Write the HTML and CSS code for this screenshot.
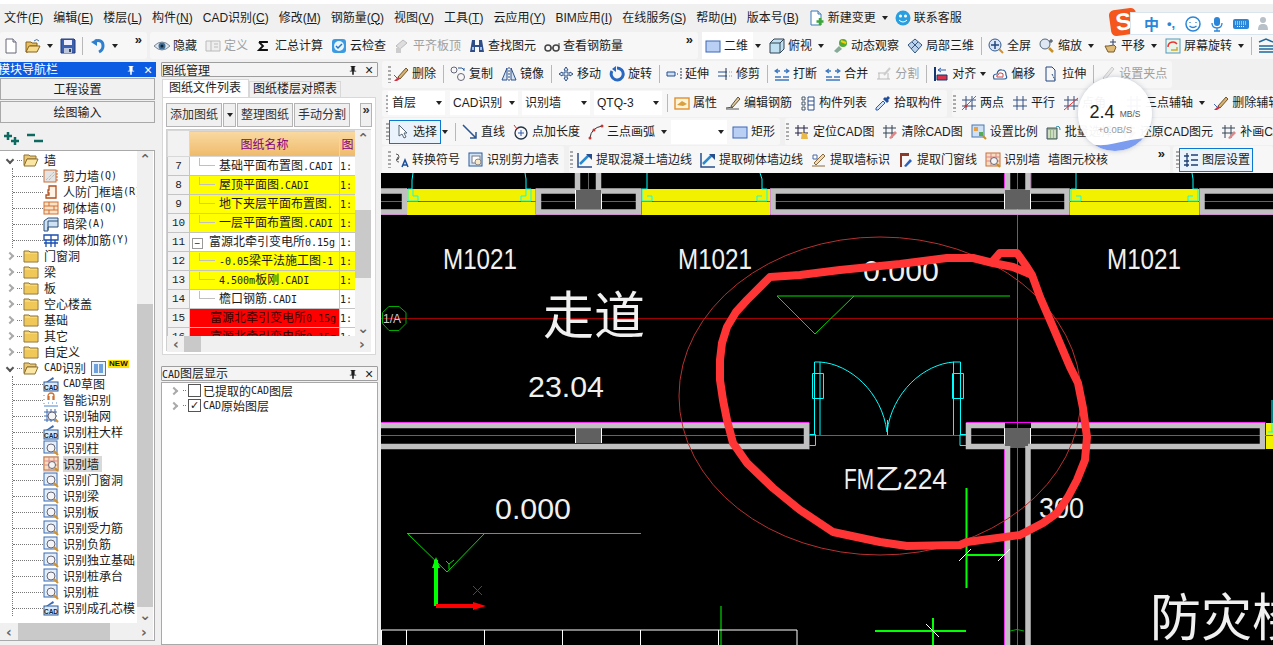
FILE: index.html
```html
<!DOCTYPE html>
<html lang="zh-CN">
<head>
<meta charset="utf-8">
<title>钢筋算量</title>
<link rel="stylesheet" href="styles.css">
</head>
<body>
<svg class="defs" xmlns="http://www.w3.org/2000/svg">
<symbol id="pinI" viewBox="0 0 10 12"><path d="M2 1h6v1H7v5h2v1H6v4H4V8H1V7h2V2H2z" fill="currentColor"/></symbol>
<symbol id="new" viewBox="0 0 16 16"><path d="M3 1h7l3 3v11H3z" fill="#fff" stroke="#667"/><path d="M10 1v3h3" fill="#dde" stroke="#667"/></symbol>
<symbol id="newc" viewBox="0 0 16 16"><path d="M2 1h7l3 3v11H2z" fill="#fff" stroke="#3a7ab8"/><path d="M9 1v3h3" fill="#dde" stroke="#3a7ab8"/><path d="M11 8v7M7.500 11.500h7" stroke="#3aa53a" stroke-width="2.500"/></symbol>
<symbol id="open" viewBox="0 0 16 16"><path d="M1 4h5l1 1h5v3H5L3 14H1z" fill="#e8c060" stroke="#86601c"/><path d="M4 8h11l-3 6H1z" fill="#f7dc8c" stroke="#86601c"/><path d="M9 3q3-3 5 0" fill="none" stroke="#3a6fb0"/></symbol>
<symbol id="save" viewBox="0 0 16 16"><path d="M1 1h13l1 1v13H1z" fill="#3c5fb0" stroke="#223a78"/><path d="M4 2h8v5H4z" fill="#eef"/><path d="M4 10h8v5H4z" fill="#bcc6dc"/><path d="M9 11h2v3H9z" fill="#345"/></symbol>
<symbol id="undo" viewBox="0 0 16 16"><path d="M5 3q8-2 8 5 0 4-4 6" fill="none" stroke="#2f7fd0" stroke-width="3"/><path d="M1 4l6-3v7z" fill="#2f7fd0"/></symbol>
<symbol id="eye" viewBox="0 0 16 16"><path d="M0 8q8-8 16 0-8 8-16 0z" fill="#dfe6ee" stroke="#7b8794"/><circle cx="8" cy="8" r="3.500" fill="#3f6f96"/><circle cx="8" cy="8" r="1.500" fill="#123"/></symbol>
<symbol id="def" viewBox="0 0 16 16"><path d="M1 3h14v10H1z" fill="#eee" stroke="#bbb"/><path d="M6 3v10M9 6h4M9 9h4" stroke="#bbb" fill="none"/></symbol>
<symbol id="sigma" viewBox="0 0 16 16"><path d="M3 4h8v1M11 11v1H3l4-4-4-4" fill="none" stroke="#111" stroke-width="1.800"/></symbol>
<symbol id="cloud" viewBox="0 0 16 16"><rect x="1" y="1" width="14" height="14" rx="3" fill="#3c9be0"/><circle cx="8" cy="8" r="5" fill="#eaf5ff"/><path d="M5 8l2 2 4-4" fill="none" stroke="#2378c0" stroke-width="1.500"/></symbol>
<symbol id="flat" viewBox="0 0 16 16"><path d="M2 8l7-6 4 3-7 6z" fill="#ddd" stroke="#bbb"/><path d="M2 10h5v5H2z" fill="#ccc"/></symbol>
<symbol id="find" viewBox="0 0 16 16"><path d="M3 2h3v5h4V2h3l2 12H10V9H6v5H1z" fill="#2f4d86"/><path d="M3 9h2v3H3zM11 9h2v3h-2z" fill="#9cc0ea"/></symbol>
<symbol id="glass" viewBox="0 0 16 16"><circle cx="4" cy="10" r="3" fill="none" stroke="#444" stroke-width="1.500"/><circle cx="12" cy="10" r="3" fill="none" stroke="#444" stroke-width="1.500"/><path d="M7 10h2M15 10V5" stroke="#444" fill="none"/></symbol>
<symbol id="r2d" viewBox="0 0 16 16"><rect x="1" y="3" width="14" height="11" fill="#b9d0f4" stroke="#3c66b8"/></symbol>
<symbol id="box" viewBox="0 0 16 16"><path d="M1 5l4-4h10v10l-4 4H1z" fill="#bfe0f0" stroke="#345"/><path d="M1 5h10v10M11 5l4-4" fill="none" stroke="#345"/></symbol>
<symbol id="orbit" viewBox="0 0 16 16"><path d="M2 13l5-5 3 3-5 4z" fill="#8a9"/><circle cx="11" cy="5" r="4" fill="#5a3"/><path d="M9 3l5 2" stroke="#fc0" stroke-width="2"/></symbol>
<symbol id="r3d" viewBox="0 0 16 16"><path d="M1 7l7-6 7 6-7 8z" fill="#bcd4ee" stroke="#35577f"/><path d="M5 4l7 7M11 4l-7 7" stroke="#35577f" fill="none"/></symbol>
<symbol id="full" viewBox="0 0 16 16"><circle cx="7" cy="7" r="6" fill="#d8e6f8" stroke="#345a90"/><path d="M7 3v8M3 7h8" stroke="#24477c" fill="none" stroke-width="1.500"/><path d="M11 11l4 4" stroke="#d09030" stroke-width="2"/></symbol>
<symbol id="zoom" viewBox="0 0 16 16"><circle cx="6" cy="6" r="5" fill="#dde8f4" stroke="#567"/><path d="M10 10l4 4" stroke="#c89028" stroke-width="2.500"/><path d="M12 1v4M10 3h4" stroke="#345"/></symbol>
<symbol id="pan" viewBox="0 0 16 16"><path d="M3 8l3 6h6l2-5-2-2-6 1z" fill="#e0bb78" stroke="#7a5b25"/><path d="M11 1v6M8 4h6" stroke="#346" fill="none"/></symbol>
<symbol id="rot" viewBox="0 0 16 16"><rect x="1" y="1" width="14" height="14" fill="#e8f6ea" stroke="#59b"/><path d="M3 9a5 5 0 0 1 9-3" fill="none" stroke="#e33" stroke-width="1.500"/><path d="M6 12h6V9" fill="none" stroke="#ca3" stroke-width="1.500"/></symbol>
<symbol id="lay" viewBox="0 0 16 16"><path d="M1 4l7-3 7 3M1 8h14M1 11h14M1 14h14" fill="none" stroke="#1c6a9c" stroke-width="1.500"/></symbol>
<symbol id="del" viewBox="0 0 16 16"><path d="M5 11l8-9 2 2-8 9z" fill="#d8b070" stroke="#6d5730"/><path d="M1 15l4-4 2 2-3 2z" fill="#c34"/><path d="M1 9l4 4" stroke="#46a"/></symbol>
<symbol id="copy" viewBox="0 0 16 16"><circle cx="4" cy="4" r="3" fill="none" stroke="#667"/><circle cx="11" cy="11" r="3.500" fill="none" stroke="#667"/><path d="M8 2h4l2 2M14 2v3" fill="none" stroke="#2b5a9a"/></symbol>
<symbol id="mirror" viewBox="0 0 16 16"><path d="M6 2L1 14h5zM10 2l5 12h-5z" fill="#d7e4f5" stroke="#2c4f8a"/><path d="M8 1v14" stroke="#2c4f8a" stroke-dasharray="2 1"/></symbol>
<symbol id="move" viewBox="0 0 16 16"><path d="M8 1l2 3H9v3h3V6l3 2-3 2V9H9v3h1l-2 3-2-3h1V9H4v1L1 8l3-2v1h3V4H6z" fill="#dfe9f6" stroke="#2d4f86"/></symbol>
<symbol id="rotate" viewBox="0 0 16 16"><path d="M8 2a6 6 0 1 1-5 3" fill="none" stroke="#2868c0" stroke-width="3"/><path d="M7 0v6L3 3z" fill="#2868c0"/></symbol>
<symbol id="extend" viewBox="0 0 16 16"><path d="M1 6h8v4H1z" fill="#cfe0f5" stroke="#244d90"/><path d="M11 8h1M15 2v12" stroke="#234" fill="none" stroke-dasharray="2 1"/></symbol>
<symbol id="trim" viewBox="0 0 16 16"><path d="M1 6h9M1 10h9" stroke="#244d90" fill="none"/><path d="M9 2v12" stroke="#234" fill="none"/><path d="M12 6h3M12 10h3" stroke="#999" fill="none" stroke-dasharray="1 1"/></symbol>
<symbol id="brk" viewBox="0 0 16 16"><path d="M1 11h6M9 11h6M1 14h14M4 3l-3 2 3 2M12 3l3 2-3 2M2 5h4M10 5h4" fill="none" stroke="#3c78c0" stroke-width="1.300"/></symbol>
<symbol id="split" viewBox="0 0 16 16"><path d="M2 7l8 0 3-4M1 13h13M3 7v6M12 7v6" fill="none" stroke="#bbb"/><path d="M8 9l6-7" stroke="#ccc" stroke-width="2"/></symbol>
<symbol id="align" viewBox="0 0 16 16"><path d="M2 1v14" stroke="#14356e" stroke-width="2"/><path d="M4 9h10v5H4z" fill="#d8334a" stroke="#14356e"/><path d="M5 4h8M5 4l3-2M5 4l3 2" fill="none" stroke="#2c5cae"/></symbol>
<symbol id="offset" viewBox="0 0 16 16"><path d="M2 13q-2-5 3-5 1-5 5-4 4 0 4 5 2 4-2 4z" fill="#fff" stroke="#2a5a9a" stroke-width="1.200"/><path d="M5 11q-1-2 1-2 1-3 3-2 3 0 2 3 0 2-1 1z" fill="none" stroke="#c44"/></symbol>
<symbol id="stretch" viewBox="0 0 16 16"><path d="M3 1h6l3 3v11H3z" fill="none" stroke="#22477e"/><path d="M9 8l3 6" stroke="#22477e" stroke-dasharray="2 1"/></symbol>
<symbol id="grip" viewBox="0 0 16 16"><path d="M3 12l9-11 2 2-9 11z" fill="#e8e8e8" stroke="#ccc"/></symbol>
<symbol id="prop" viewBox="0 0 16 16"><rect x="1" y="3" width="14" height="11" fill="#fff3d8" stroke="#e09030" stroke-width="1.400"/><path d="M3 10l5-4 5 3-4 2z" fill="#d8a040"/></symbol>
<symbol id="edit" viewBox="0 0 16 16"><path d="M1 13l7-1M6 11l7-9 2 2-8 9z" fill="#e8c898" stroke="#554"/><path d="M1 14h13" stroke="#555"/></symbol>
<symbol id="list" viewBox="0 0 16 16"><path d="M2 2h3v3H2zM2 7h3v3H2zM2 12h3v3H2z" fill="#fff" stroke="#456"/><path d="M8 2h6v13H8z" fill="#fff" stroke="#2c4f8a"/><path d="M8 6h6M8 10h6" stroke="#2c4f8a"/></symbol>
<symbol id="pick" viewBox="0 0 16 16"><path d="M3 15l-2-0 0-2 7-7 2 2z" fill="#cfe2f8" stroke="#2c5cae"/><path d="M8 4l4 4 2-2-1-1 2-2-2-2-2 2-1-1z" fill="#234f9a"/></symbol>
<symbol id="twop" viewBox="0 0 16 16"><path d="M5 1v14M11 1v14M1 5h14M1 11h14" fill="none" stroke="#334e80"/><path d="M1 15L15 1" stroke="#3a9a3a"/><circle cx="5" cy="11" r="1.500" fill="#c33"/></symbol>
<symbol id="para" viewBox="0 0 16 16"><path d="M5 1v14M11 1v14M1 5h14M1 11h14" fill="none" stroke="#334e80"/></symbol>
<symbol id="angp" viewBox="0 0 16 16"><path d="M5 1v14M11 1v14M1 5h14M1 11h14" fill="none" stroke="#334e80"/><path d="M1 15L15 3" stroke="#e33"/></symbol>
<symbol id="layr" viewBox="0 0 16 16"><path d="M4 1v14M1 4h5M1 9h5M1 13h5M8 3h7M8 8h7M8 13h7" fill="none" stroke="#1f3f70" stroke-width="1.300"/></symbol>
<symbol id="sel" viewBox="0 0 16 16"><path d="M5 1v11l3-2 2 4 2-1-2-4h3z" fill="#fff" stroke="#567"/></symbol>
<symbol id="lin" viewBox="0 0 16 16"><path d="M1 1l13 13M14 8v6H8" fill="none" stroke="#2c5590" stroke-width="1.500"/></symbol>
<symbol id="plen" viewBox="0 0 16 16"><circle cx="8" cy="9" r="6" fill="none" stroke="#234" stroke-width="1.300"/><path d="M8 6v6M5 9h6" stroke="#2c5cae"/><path d="M1 1l3 4" stroke="#c33"/></symbol>
<symbol id="arc" viewBox="0 0 16 16"><path d="M2 14q1-10 12-12" fill="none" stroke="#333"/><circle cx="2" cy="14" r="1.500" fill="#c33"/><circle cx="14" cy="2" r="1.500" fill="#c33"/><circle cx="6" cy="6" r="1.500" fill="#c33"/></symbol>
<symbol id="loc" viewBox="0 0 16 16"><path d="M4 1v11M10 1v11M1 4h13M1 9h13" fill="none" stroke="#224"/><path d="M7 15l1-7 5 2 1 5z" fill="#e8b848"/></symbol>
<symbol id="clr" viewBox="0 0 16 16"><path d="M4 1v13M10 1v13M1 4h13M1 9h13" fill="none" stroke="#345"/><path d="M7 14l6-7 2 2-6 6z" fill="#d88"/></symbol>
<symbol id="scale" viewBox="0 0 16 16"><rect x="1" y="1" width="12" height="12" fill="#cfe0f4" stroke="#4a78b0"/><rect x="3" y="3" width="4" height="4" fill="#e8a040"/><rect x="8" y="8" width="4" height="4" fill="#5a5"/><path d="M12 12l3 3" stroke="#c89028" stroke-width="2"/></symbol>
<symbol id="batch" viewBox="0 0 16 16"><path d="M1 4h10v11H1z" fill="#9bb888" stroke="#456"/><path d="M3 6v8M6 6v8M9 6v8" stroke="#fff"/><path d="M10 3q4-2 4 3" fill="none" stroke="#28a"/></symbol>
<symbol id="conv" viewBox="0 0 16 16"><path d="M3 2a3 3 0 1 1 0 6M5 5q-3 5 1 5" fill="none" stroke="#555"/><path d="M9 15l3-7 3 7M10 13h4" fill="none" stroke="#1a4f9c" stroke-width="1.500"/></symbol>
<symbol id="tab" viewBox="0 0 16 16"><rect x="1" y="1" width="13" height="13" fill="#d5e5f8" stroke="#2a5a9a"/><rect x="4" y="4" width="8" height="7" fill="#fff" stroke="#778"/><circle cx="10" cy="10" r="3" fill="#f4e8c8" stroke="#888"/></symbol>
<symbol id="ext" viewBox="0 0 16 16"><path d="M1 1v14h14" fill="none" stroke="#274d8c" stroke-width="1.500"/><path d="M3 12l9-9" stroke="#2a8ad0" stroke-width="2.500"/><path d="M9 2h6v6z" fill="#274d8c"/></symbol>
<symbol id="ext2" viewBox="0 0 16 16"><path d="M1 14h13" stroke="#8a6a3a"/><path d="M3 11l9-9 2 2-9 9z" fill="#f0d8b8" stroke="#8a6a3a"/><path d="M2 3h4v4H2z" fill="#fff" stroke="#46a"/></symbol>
<symbol id="door" viewBox="0 0 16 16"><path d="M2 1h9v3H4v11H2z" fill="#8a3a2a"/><path d="M6 14l6-7 2 2-6 6z" fill="#2a60c0"/></symbol>
<symbol id="wall" viewBox="0 0 16 16"><rect x="1" y="1" width="14" height="13" fill="#f8dcc0" stroke="#c87038"/><path d="M1 5h14M1 9h14M6 1v13M11 1v13" stroke="#d88" fill="none"/><circle cx="9" cy="9" r="3.500" fill="#f4f4f4" stroke="#667"/><path d="M12 12l3 3" stroke="#c89028" stroke-width="2"/></symbol>
<symbol id="fo" viewBox="0 0 16 16"><path d="M1 3h5l1 1h6v3H4L2 13H1z" fill="#eac874" stroke="#8c7030"/><path d="M4 7h11l-3 7H1z" fill="#fbe6a4" stroke="#8c7030"/></symbol>
<symbol id="fc" viewBox="0 0 16 16"><path d="M1 3h5l1 1h8v10H1z" fill="#f6d878" stroke="#8c7030"/><path d="M2 6h12v7H2z" fill="#f0c858"/></symbol>
<symbol id="tw1" viewBox="0 0 16 16"><rect x="1" y="2" width="12" height="12" fill="#e4e4e4" stroke="#c87038"/><path d="M3 12l8-8M6 12l6-6" stroke="#aaa" stroke-dasharray="1 1"/><path d="M14 2v12" stroke="#d06020" stroke-dasharray="2 1"/></symbol>
<symbol id="tw2" viewBox="0 0 16 16"><path d="M6 2h7v12H3v-3h3V9H5V6h1z" fill="#fff3e4" stroke="#b05020" stroke-width="1.300"/></symbol>
<symbol id="tw3" viewBox="0 0 16 16"><rect x="1" y="2" width="14" height="12" fill="#fbe2c8" stroke="#d07030"/><path d="M1 6h14M1 10h14M6 2v4M11 6v4M6 10v4" stroke="#d07030" fill="none"/></symbol>
<symbol id="tw4" viewBox="0 0 16 16"><path d="M1 5l4-3h10v9H5v4H1z" fill="#cfe2f4" stroke="#2c4f7a"/><path d="M5 5v9M5 5h10" stroke="#2c4f7a" fill="none"/></symbol>
<symbol id="tw5" viewBox="0 0 16 16"><path d="M1 3h14v5H1zM3 8v7M8 3v12M12 8v7M1 11h14" fill="none" stroke="#1a4fb0" stroke-width="1.300"/></symbol>
<symbol id="tcad" viewBox="0 0 16 16"><rect x="1" y="6" width="14" height="9" fill="#dde8f8" stroke="#2a5a9a"/><path d="M3 6l7-5 1 2-6 3z" fill="#3a6ab0"/><text x="8" y="13.500" font-size="6.500" text-anchor="middle" font-family="Liberation Sans" font-weight="700" fill="#123">CAD</text></symbol>
<symbol id="tmag" viewBox="0 0 16 16"><rect x="1" y="1" width="13" height="12" fill="#e4eefa" stroke="#3a6ab0"/><circle cx="8" cy="8" r="4" fill="#f5f5f5" stroke="#667"/><path d="M11 11l4 4" stroke="#d09030" stroke-width="2"/></symbol>
<symbol id="tgrid" viewBox="0 0 16 16"><path d="M4 1v13M8 1v13M12 1v13M1 4h13M1 8h13M1 12h13" stroke="#3a6ab0" fill="none"/><circle cx="9" cy="8" r="4" fill="#f5f5f5" stroke="#667"/><path d="M12 11l3 3" stroke="#d09030" stroke-width="2"/></symbol>
<symbol id="tmgn" viewBox="0 0 16 16"><path d="M5 8V4a3 3 0 0 1 6 0v4M10 8V4M6 8V4" fill="none" stroke="#d07030" stroke-width="1.300"/><path d="M1 3v1M1 7v1M1 11v1M1 14h14M5 11h1M9 11h1M13 11h1" stroke="#4a88d0"/></symbol>
</svg>

<div class="app">
  <nav class="menubar">
    <span>文件(<u>F</u>)</span><span>编辑(<u>E</u>)</span><span>楼层(<u>L</u>)</span><span>构件(<u>N</u>)</span><span>CAD识别(<u>C</u>)</span><span>修改(<u>M</u>)</span><span>钢筋量(<u>Q</u>)</span><span>视图(<u>V</u>)</span><span>工具(<u>T</u>)</span><span>云应用(<u>Y</u>)</span><span>BIM应用(<u>I</u>)</span><span>在线服务(<u>S</u>)</span><span>帮助(<u>H</u>)</span><span>版本号(<u>B</u>)</span>
    <span class="it"><svg class="ic"><use href="#newc"/></svg>新建变更</span><i class="car"></i>
    <span class="it"><svg class="ic" viewBox="0 0 16 16"><circle cx="8" cy="8" r="7.500" fill="#2a9fe0"/><circle cx="5.500" cy="6" r="1.500" fill="#fff"/><circle cx="10.500" cy="6" r="1.500" fill="#fff"/><path d="M4 10q4 4 8 0" fill="none" stroke="#fff"/></svg>联系客服</span>
  </nav>

  <div class="row top">
    <div class="seg seg-file">
      <svg class="ic"><use href="#new"/></svg><svg class="ic"><use href="#open"/></svg><i class="car"></i><svg class="ic"><use href="#save"/></svg><b class="sep"></b><svg class="ic"><use href="#undo"/></svg><i class="car"></i><span class="over">»</span>
    </div>
    <div class="seg seg-main">
      <span class="it"><svg class="ic"><use href="#eye"/></svg>隐藏</span>
      <span class="it off"><svg class="ic"><use href="#def"/></svg>定义</span>
      <span class="it"><svg class="ic"><use href="#sigma"/></svg>汇总计算</span>
      <span class="it"><svg class="ic"><use href="#cloud"/></svg>云检查</span>
      <span class="it off"><svg class="ic"><use href="#flat"/></svg>平齐板顶</span>
      <span class="it"><svg class="ic"><use href="#find"/></svg>查找图元</span>
      <span class="it"><svg class="ic"><use href="#glass"/></svg>查看钢筋量</span>
      <span class="over">»</span>
    </div>
    <div class="seg seg-view">
      <span class="it lit"><svg class="ic"><use href="#r2d"/></svg>二维</span><i class="car"></i>
      <span class="it"><svg class="ic"><use href="#box"/></svg>俯视</span><i class="car"></i>
      <span class="it"><svg class="ic"><use href="#orbit"/></svg>动态观察</span>
      <span class="it"><svg class="ic"><use href="#r3d"/></svg>局部三维</span><b class="sep"></b>
      <span class="it"><svg class="ic"><use href="#full"/></svg>全屏</span>
      <span class="it"><svg class="ic"><use href="#zoom"/></svg>缩放</span><i class="car"></i>
      <span class="it"><svg class="ic"><use href="#pan"/></svg>平移</span><i class="car"></i>
      <span class="it"><svg class="ic"><use href="#rot"/></svg>屏幕旋转</span><i class="car"></i><b class="sep"></b>
      <svg class="ic"><use href="#lay"/></svg>
    </div>
  </div>

  <div class="main">
    <aside class="nav">
      <h2 class="title blue"><span class="title-text">模块导航栏</span><svg class="pin"><use href="#pinI"/></svg><span class="close">×</span></h2>
      <button class="navbtn">工程设置</button>
      <button class="navbtn">绘图输入</button>
      <div class="plusrow">
        <svg class="pm" viewBox="0 0 16 14"><path d="M4 1v8M0 5h8M11 6v8M7 10h8" stroke="#0c6a60" stroke-width="2.500" fill="none"/></svg>
        <svg class="pm" viewBox="0 0 16 14"><path d="M0 4h8M7 10h9" stroke="#0c6a60" stroke-width="2.500" fill="none"/></svg>
      </div>
      <div class="treebox">
        <div class="tree">
          <div class="node"><i class="chev down"></i><b class="dash"></b><svg class="ic"><use href="#fo"/></svg>墙</div>
          <div class="branch">
            <div class="leaf"><b class="dash2"></b><svg class="ic"><use href="#tw1"/></svg>剪力墙<span class="lat">(Q)</span></div>
            <div class="leaf"><b class="dash2"></b><svg class="ic"><use href="#tw2"/></svg>人防门框墙<span class="lat">(R)</span></div>
            <div class="leaf"><b class="dash2"></b><svg class="ic"><use href="#tw3"/></svg>砌体墙<span class="lat">(Q)</span></div>
            <div class="leaf"><b class="dash2"></b><svg class="ic"><use href="#tw4"/></svg>暗梁<span class="lat">(A)</span></div>
            <div class="leaf"><b class="dash2"></b><svg class="ic"><use href="#tw5"/></svg>砌体加筋<span class="lat">(Y)</span></div>
          </div>
          <div class="node"><i class="chev"></i><b class="dash"></b><svg class="ic"><use href="#fc"/></svg>门窗洞</div>
          <div class="node"><i class="chev"></i><b class="dash"></b><svg class="ic"><use href="#fc"/></svg>梁</div>
          <div class="node"><i class="chev"></i><b class="dash"></b><svg class="ic"><use href="#fc"/></svg>板</div>
          <div class="node"><i class="chev"></i><b class="dash"></b><svg class="ic"><use href="#fc"/></svg>空心楼盖</div>
          <div class="node"><i class="chev"></i><b class="dash"></b><svg class="ic"><use href="#fc"/></svg>基础</div>
          <div class="node"><i class="chev"></i><b class="dash"></b><svg class="ic"><use href="#fc"/></svg>其它</div>
          <div class="node"><i class="chev"></i><b class="dash"></b><svg class="ic"><use href="#fc"/></svg>自定义</div>
          <div class="node"><i class="chev down"></i><b class="dash"></b><svg class="ic"><use href="#fo"/></svg><span class="lat">CAD</span>识别
            <svg class="cadbtn" viewBox="0 0 15 15"><rect x=".5" y=".5" width="14" height="14" fill="#eaf2fb" stroke="#4a7ab8"/><path d="M3 3h4v9H3zM8 3h4v9H8z" fill="#6fa2dc"/></svg><em class="newtag">NEW</em>
          </div>
          <div class="branch">
            <div class="leaf"><b class="dash2"></b><svg class="ic"><use href="#tcad"/></svg><span class="lat">CAD</span>草图</div>
            <div class="leaf"><b class="dash2"></b><svg class="ic"><use href="#tmgn"/></svg>智能识别</div>
            <div class="leaf"><b class="dash2"></b><svg class="ic"><use href="#tgrid"/></svg>识别轴网</div>
            <div class="leaf"><b class="dash2"></b><svg class="ic"><use href="#tcad"/></svg>识别柱大样</div>
            <div class="leaf"><b class="dash2"></b><svg class="ic"><use href="#tmag"/></svg>识别柱</div>
            <div class="leaf cur"><b class="dash2"></b><svg class="ic"><use href="#wall"/></svg><span class="curtext">识别墙</span></div>
            <div class="leaf"><b class="dash2"></b><svg class="ic"><use href="#tmag"/></svg>识别门窗洞</div>
            <div class="leaf"><b class="dash2"></b><svg class="ic"><use href="#tmag"/></svg>识别梁</div>
            <div class="leaf"><b class="dash2"></b><svg class="ic"><use href="#tmag"/></svg>识别板</div>
            <div class="leaf"><b class="dash2"></b><svg class="ic"><use href="#tmag"/></svg>识别受力筋</div>
            <div class="leaf"><b class="dash2"></b><svg class="ic"><use href="#tmag"/></svg>识别负筋</div>
            <div class="leaf"><b class="dash2"></b><svg class="ic"><use href="#tmag"/></svg>识别独立基础</div>
            <div class="leaf"><b class="dash2"></b><svg class="ic"><use href="#tmag"/></svg>识别桩承台</div>
            <div class="leaf"><b class="dash2"></b><svg class="ic"><use href="#tmag"/></svg>识别桩</div>
            <div class="leaf"><b class="dash2"></b><svg class="ic"><use href="#tcad"/></svg>识别成孔芯模</div>
          </div>
        </div>
        <div class="vbar tree-vbar"><span class="arr">⌃</span><span class="thumb"></span><span class="arr">⌄</span></div>
        <div class="hbar"><span class="arr">‹</span><span class="hthumb"></span><span class="arr">›</span></div>
      </div>
    </aside>

    <section class="drawings">
      <h2 class="title"><span class="title-text">图纸管理</span><svg class="pin"><use href="#pinI"/></svg><span class="close">×</span></h2>
      <div class="tabs"><span class="tab on">图纸文件列表</span><span class="tab">图纸楼层对照表</span></div>
      <div class="tabbody">
        <div class="dbar">
          <span class="dbtn">添加图纸</span><span class="dbtn drop"><i class="car"></i></span><span class="dbtn">整理图纸</span><span class="dbtn">手动分割</span><span class="dbtn more">»</span>
        </div>
        <div class="sheet">
          <div class="sheetview">
            <table class="grid">
              <colgroup><col class="c1"><col class="c2"><col class="c3"></colgroup>
              <thead><tr><th></th><th>图纸名称</th><th>图</th></tr></thead>
              <tbody>
                <tr><td class="n">7</td><td><b class="tl"></b>基础平面布置图<span class="lat">.CADI</span></td><td><span class="lat">1:</span></td></tr>
                <tr><td class="n">8</td><td class="y"><b class="tl"></b>屋顶平面图<span class="lat">.CADI</span></td><td class="y"><span class="lat">1:</span></td></tr>
                <tr><td class="n">9</td><td class="y"><b class="tl"></b>地下夹层平面布置图<span class="lat">.</span></td><td class="y"><span class="lat">1:</span></td></tr>
                <tr><td class="n">10</td><td class="y"><b class="tl"></b>一层平面布置图<span class="lat">.CADI</span></td><td class="y"><span class="lat">1:</span></td></tr>
                <tr><td class="n">11</td><td><b class="minus">−</b>富源北牵引变电所<span class="lat">0.15g</span></td><td><span class="lat">1:</span></td></tr>
                <tr><td class="n">12</td><td class="y"><b class="tl"></b><span class="lat">-0.05</span>梁平法施工图<span class="lat">-1</span></td><td class="y"><span class="lat">1:</span></td></tr>
                <tr><td class="n">13</td><td class="y"><b class="tl"></b><span class="lat">4.500m</span>板刚<span class="lat">.CADI</span></td><td class="y"><span class="lat">1:</span></td></tr>
                <tr><td class="n">14</td><td><b class="tl"></b>檐口钢筋<span class="lat">.CADI</span></td><td><span class="lat">1:</span></td></tr>
                <tr><td class="n">15</td><td class="r"><b class="ind"></b>富源北牵引变电所<span class="lat">0.15g</span></td><td><span class="lat">1:</span></td></tr>
                <tr><td class="n">16</td><td class="r"><b class="ind"></b>富源北牵引变电所<span class="lat">0.15g</span></td><td><span class="lat">1:</span></td></tr>
              </tbody>
            </table>
          </div>
          <div class="vbar grid-vbar"><span class="arr">⌃</span><span class="thumb"></span><span class="arr">⌄</span></div>
          <div class="hbar"><span class="arr">‹</span><span class="hthumb"></span><span class="arr">›</span></div>
        </div>
      </div>
      <h2 class="title second"><span class="title-text"><span class="lat">CAD</span>图层显示</span><svg class="pin"><use href="#pinI"/></svg><span class="close">×</span></h2>
      <div class="layers">
        <div class="lrow"><i class="chev"></i><b class="ld"></b><span class="cb"></span>已提取的<span class="lat">CAD</span>图层</div>
        <div class="lrow"><i class="chev"></i><b class="ld"></b><span class="cb">✓</span><span class="lat">CAD</span>原始图层</div>
      </div>
    </section>

    <section class="work">
      <div class="row"><div class="seg wseg lead">
        <b class="hand"></b>
        <span class="it"><svg class="ic"><use href="#del"/></svg>删除</span><b class="sep"></b>
        <span class="it"><svg class="ic"><use href="#copy"/></svg>复制</span>
        <span class="it"><svg class="ic"><use href="#mirror"/></svg>镜像</span><b class="sep"></b>
        <span class="it"><svg class="ic"><use href="#move"/></svg>移动</span>
        <span class="it"><svg class="ic"><use href="#rotate"/></svg>旋转</span><b class="sep"></b>
        <span class="it"><svg class="ic"><use href="#extend"/></svg>延伸</span>
        <span class="it"><svg class="ic"><use href="#trim"/></svg>修剪</span><b class="sep"></b>
        <span class="it"><svg class="ic"><use href="#brk"/></svg>打断</span>
        <span class="it"><svg class="ic"><use href="#brk"/></svg>合并</span>
        <span class="it off"><svg class="ic"><use href="#split"/></svg>分割</span><b class="sep"></b>
        <span class="it"><svg class="ic"><use href="#align"/></svg>对齐</span><i class="car tight"></i>
        <span class="it"><svg class="ic"><use href="#offset"/></svg>偏移</span>
        <span class="it"><svg class="ic"><use href="#stretch"/></svg>拉伸</span><b class="sep"></b>
        <span class="it off"><svg class="ic"><use href="#grip"/></svg>设置夹点</span>
      </div></div>

      <div class="row"><div class="seg wseg">
        <b class="hand"></b>
        <span class="combo first">首层<i class="car"></i></span>
        <span class="combo">CAD识别<i class="car"></i></span>
        <span class="combo">识别墙<i class="car"></i></span>
        <span class="combo">QTQ-3<i class="car"></i></span><b class="sep aftercombo"></b>
        <span class="it"><svg class="ic"><use href="#prop"/></svg>属性</span>
        <span class="it"><svg class="ic"><use href="#edit"/></svg>编辑钢筋</span>
        <span class="it"><svg class="ic"><use href="#list"/></svg>构件列表</span>
        <span class="it"><svg class="ic"><use href="#pick"/></svg>拾取构件</span>
      </div><div class="seg axis">
        <b class="hand"></b>
        <span class="it"><svg class="ic"><use href="#twop"/></svg>两点</span>
        <span class="it"><svg class="ic"><use href="#para"/></svg>平行</span>
        <span class="it"><svg class="ic"><use href="#angp"/></svg>点角</span>
        <span class="it far"><svg class="ic"><use href="#para"/></svg>三点辅轴</span><i class="car"></i>
        <span class="it"><svg class="ic"><use href="#del"/></svg>删除辅轴</span>
      </div></div>

      <div class="row"><div class="seg wseg">
        <b class="hand"></b>
        <span class="it box"><svg class="ic"><use href="#sel"/></svg>选择</span><i class="car"></i><b class="sep"></b>
        <span class="it"><svg class="ic"><use href="#lin"/></svg>直线</span>
        <span class="it"><svg class="ic"><use href="#plen"/></svg>点加长度</span>
        <span class="it"><svg class="ic"><use href="#arc"/></svg>三点画弧</span><i class="car"></i>
        <span class="combo blank"><i class="car"></i></span>
        <span class="it"><svg class="ic"><use href="#r2d"/></svg>矩形</span>
      </div><div class="seg axis">
        <b class="hand"></b>
        <span class="it"><svg class="ic"><use href="#loc"/></svg>定位CAD图</span>
        <span class="it"><svg class="ic"><use href="#clr"/></svg>清除CAD图</span>
        <span class="it"><svg class="ic"><use href="#scale"/></svg>设置比例</span>
        <span class="it"><svg class="ic"><use href="#batch"/></svg>批量选择</span>
        <span class="it"><svg class="ic"><use href="#clr"/></svg>还原CAD图元</span>
        <span class="it"><svg class="ic"><use href="#clr"/></svg>补画CAD</span>
      </div></div>

      <div class="row last"><div class="seg wseg lead">
        <b class="hand"></b>
        <span class="it"><svg class="ic"><use href="#conv"/></svg>转换符号</span>
        <span class="it"><svg class="ic"><use href="#tab"/></svg>识别剪力墙表</span>
      </div><div class="seg ext">
        <b class="hand"></b>
        <span class="it"><svg class="ic"><use href="#ext"/></svg>提取混凝土墙边线</span>
        <span class="it"><svg class="ic"><use href="#ext"/></svg>提取砌体墙边线</span>
        <span class="it"><svg class="ic"><use href="#ext2"/></svg>提取墙标识</span>
        <span class="it"><svg class="ic"><use href="#door"/></svg>提取门窗线</span>
        <span class="it"><svg class="ic"><use href="#wall"/></svg>识别墙</span>
        <span class="it">墙图元校核</span>
        <span class="over">»</span>
      </div><div class="seg laybox">
        <b class="hand"></b>
        <span class="it box"><svg class="ic"><use href="#layr"/></svg>图层设置</span>
      </div></div>

      <svg class="canvas" viewBox="381 173 892 472" xmlns="http://www.w3.org/2000/svg">
        <rect x="381" y="173" width="892" height="472" fill="#000"/>
        <g fill="#f2f200"><rect x="407" y="189" width="129" height="26"/><rect x="641" y="189" width="129" height="26"/><rect x="1070" y="189" width="129" height="26"/><rect x="1266" y="423" width="7" height="26"/></g>
        <g fill="none" stroke="#646464"><path d="M381 201.500h892M381 435.500h892"/><path d="M1017.500 173v472"/><path d="M588.500 173v16"/></g>
        <g fill="#606060"><rect x="576" y="189" width="25" height="20"/><rect x="1005" y="189" width="25" height="20"/><rect x="576" y="428" width="25" height="15"/><rect x="1005" y="428" width="25" height="20"/></g>
        <g fill="none" stroke="#fff"><path d="M575.500 189v20M601.500 189v20M1004.500 189v20M1030.500 189v20M575.500 428v15M601.500 428v15M1004.500 428v20M1030.500 428v20"/></g>
        <g fill="none" stroke="#f0f"><path d="M381 214.500h25.500v-26M536 188.500v26h105.500v-26M770.500 188.500v26h299M1199.500 214.500h74M1004.500 173v17M1031 173v16"/><path d="M381 422.500h428v27M966.500 449v-26.500h299M1004.500 449v196"/></g>
        <g fill="none" stroke="#c0c0c0" stroke-width="5.500">
          <path d="M381 191h23.500v21H381"/>
          <path d="M575 191h-36.500v21h100v-21H601"/>
          <path d="M1005 191H773v21h294v-21h-37"/>
          <path d="M1273 191h-71v21h71"/>
          <path d="M577.500 173v17M598.500 173v17M1007.500 173v17M1028 173v17"/>
          <path d="M381 425.500h425.500v21H381"/>
          <path d="M1005 425.500h-36.500v21H1005M1031 425.500h231.500v21H1028M1007.500 446v199M1028 446v199"/>
        </g>
        <g fill="none" stroke="#0ff">
          <path d="M413 173l-1 7v9h-4v12h10v-5h-5v-7M525 173l1 6v10h5v12h-10v-5h5v-7M647 173v16h-5v12h10v-5h-5M760 173l2 6v10h5v12h-10v-5h5M1076 173v16h-5v12h10v-5h-5M1192 173l1 6v10h5v12h-10v-5h5"/>
          <path d="M814.500 435v-73h5.500v73M812.500 373.500h11v25h-11zM820 362c30 2 62 30 67 70M953.500 435v-73h7v73M952.500 373.500h11v25h-11zM954 362c-30 2-62 30-67 70M887.500 420v15M809.500 434.500h6v11h-6M966 434.500h-6v11h6"/>
          <path d="M1268 432h5M1272 400v32"/>
        </g>
        <path d="M381 318.500h892" stroke="#a00000" fill="none"/>
        <g fill="none" stroke="#00e000"><path d="M777 296h233M777 296l38 38 39-38M407 533.500h234M407 533l40 39 38-39"/><path d="M446 561l3 3 5-4M449 564v5"/></g>
        <g fill="none" stroke="#0f0"><path d="M966.500 488v100M966 555h39" stroke-width="2"/><path d="M875 631h91M933 618v27" stroke-width="2"/><path d="M721 606v39"/></g>
        <path d="M1010 631q7-3 14 0" fill="none" stroke="#0a0"/>
        <g fill="none" stroke="#fff"><path d="M959 561l12-12M998 561l12-12M926 624l13 13"/><path d="M381.500 645v-15h415.500v15M406.500 630v15M484.500 630v15M562.500 630v15M640.500 630v15M718.500 630v15"/></g>
        <g class="cadtx">
          <text x="443" y="269" textLength="74" lengthAdjust="spacingAndGlyphs">M1021</text>
          <text x="678" y="269" textLength="74" lengthAdjust="spacingAndGlyphs">M1021</text>
          <text x="1107" y="269" textLength="74" lengthAdjust="spacingAndGlyphs">M1021</text>
          <text x="863" y="281" textLength="76" lengthAdjust="spacingAndGlyphs">0.000</text>
          <text x="528" y="397" textLength="76" lengthAdjust="spacingAndGlyphs">23.04</text>
          <text x="495" y="519" textLength="76" lengthAdjust="spacingAndGlyphs">0.000</text>
          <text x="844" y="489" textLength="30" lengthAdjust="spacingAndGlyphs">FM</text>
          <text x="903" y="489" textLength="44" lengthAdjust="spacingAndGlyphs">224</text>
          <text x="1039" y="518" textLength="45" lengthAdjust="spacingAndGlyphs">300</text>
          <text x="875" y="489" class="cjk30">乙</text>
          <text x="543" y="334" class="cjk52">走道</text>
          <text x="1150" y="636" class="cjk52">防灾楼</text>
          <text x="383" y="323" class="small">1/A</text>
        </g>
        <path d="M389 306.500h10l7 6v11l-7 7h-10l-6.500-7v-11z" fill="none" stroke="#0a0"/>
        <g fill="none">
          <path d="M436 606v-46" stroke="#0f0" stroke-width="4"/><path d="M436 557l-4 11h8z" fill="#0f0"/>
          <path d="M436 606h42" stroke="#f00" stroke-width="4"/><path d="M486 606l-13-4v8z" fill="#f00"/>
          <path d="M473 586l9 9M482 586l-9 9" stroke="#f00"/>
        </g>
        <ellipse cx="880" cy="396" rx="201" ry="159" fill="none" stroke="#b83030"/>
        <path d="M770 277L800 275 840 270 900 264 947 258H973L993 263 1013 267 1032 275 1040 297 1053 327 1070 367 1078 383 1083 408 1087 437 1085 460 1077 480 1068 497 1057 513 1043 523 1020 535 967 542 960 545 907 546 880 542 833 532 800 510 773 488 747 463 733 443 727 420 723 400 720 380 720 360 722 343 727 327 736 312 747 300ZM993 261L1000 253H1017L1027 267 1032 275" fill="none" stroke="#ff3535" stroke-width="8" stroke-linejoin="round" stroke-linecap="round"/>
      </svg>
    </section>
  </div>
</div>

<div class="sogou">
  <span class="slogo">S</span>
  <span class="sbar"><b class="szh">中</b><b class="sdot">•,</b>
    <svg class="si" viewBox="0 0 16 16"><circle cx="8" cy="8" r="7" fill="none" stroke="#2a86d8" stroke-width="1.500"/><path d="M5 6v1M11 6v1M4.500 10q3.500 3 7 0" fill="none" stroke="#2a86d8" stroke-width="1.300"/></svg>
    <svg class="si" viewBox="0 0 16 16"><rect x="5" y="1" width="6" height="9" rx="3" fill="#2a86d8"/><path d="M3 7q0 5 5 5t5-5M8 12v3M5 15h6" fill="none" stroke="#2a86d8" stroke-width="1.300"/></svg>
    <svg class="si" viewBox="0 0 16 16"><rect x="0" y="3" width="16" height="10" rx="2" fill="#2a86d8"/><path d="M2 6h12M2 8h12M4 10.500h8" stroke="#fff" stroke-dasharray="1 1" fill="none"/></svg>
    <svg class="si" viewBox="0 0 16 16"><circle cx="6" cy="4" r="3" fill="#b8c0c8"/><path d="M1 14q0-7 5-6 5-1 5 6z" fill="#b8c0c8"/></svg>
  </span>
</div>

<div class="speed">
  <div class="spd-main">2.4 <small>MB/S</small></div>
  <div class="spd-sub">+0.0B/S</div>
  <svg class="wave" viewBox="0 0 74 20" preserveAspectRatio="none"><path d="M0 6q18 10 36 4t38-8v18H0z" fill="#7c9cf0"/></svg>
</div>
</body>
</html>
```

FILE: styles.css
```css
* { box-sizing: border-box; }
html, body { margin: 0; height: 100%; }
body {
  width: 1273px;
  height: 645px;
  overflow: hidden;
  background: #f0f0f0;
  color: #1c1c1c;
  font: 12px/16px "Liberation Sans", "Noto Sans CJK SC", sans-serif;
  position: relative;
}
.defs { display: none; }
.app { display: flex; flex-direction: column; height: 645px; }

.menubar {
  height: 31px;
  border-top: 4px solid #fff;
  padding-left: 4px;
  display: flex;
  align-items: center;
  gap: 10px;
  white-space: nowrap;
}
.menubar .it { margin-right: -2px; }
.menubar .car { margin-right: -3px; }
u { text-decoration: underline; text-underline-offset: 1px; }

.ic { width: 16px; height: 16px; flex: none; margin-right: 3px; display: block; }
.it { display: inline-flex; align-items: center; white-space: nowrap; height: 22px; margin-right: 8px; }
.off { color: #a0a0a0; }
.car { width: 0; height: 0; flex: none; border: 3px solid transparent; border-top: 4px solid #222; border-bottom: 0; margin: 0 8px 0 -2px; }
.car.tight { margin: 0 6px 0 -4px; }
.sep { width: 1px; height: 18px; flex: none; background: #b8b8b8; margin: 0 6px 0 -1px; }
.over { margin-left: auto; font: 700 13px/12px "Liberation Sans", sans-serif; align-self: flex-start; padding: 0 5px 0 0; margin-top: 2px; }

.row { height: 29px; display: flex; align-items: center; white-space: nowrap; overflow: hidden; }
.row.last { height: 27px; }
.row.top { height: 29px; gap: 3px; }
.seg { height: 27px; display: flex; align-items: center; background: #f7f7f7; border-radius: 3px; flex: none; }
.seg-file { width: 147px; padding-left: 3px; }
.seg-file .ic { margin-right: 6px; }
.seg-file .car { margin: 0 7px 0 0; }
.seg-file .sep { margin: 0 7px 0 0; }
.seg-main { width: 548px; padding-left: 4px; }
.seg-view { flex: 1; padding-left: 0; margin-left: 1px; }
.lit { background: #fff; height: 27px; padding: 0 5px 0 3px; margin-right: 4px; }

.main { flex: 1; display: flex; min-height: 0; }

.title {
  margin: 0;
  height: 15px;
  font-weight: 400;
  font-size: 12px;
  line-height: 14px;
  display: flex;
  align-items: center;
  white-space: nowrap;
  overflow: hidden;
}
.title-text { flex: 1; }
.pin { width: 8px; height: 10px; flex: none; margin-right: 4px; }
.close { width: 16px; flex: none; text-align: center; font: 14px/14px "Liberation Sans", sans-serif; }

.nav { width: 156px; flex: none; padding-top: 2px; display: flex; flex-direction: column; }
.blue { background: #0b5ce2; color: #fff; }
.blue .title-text { margin-left: -2px; }
.blue .pin { margin-right: 5px; }
.navbtn {
  height: 22px;
  margin: 1px 1px 0 0;
  flex: none;
  width: 155px;
  background: #f1f1f1;
  border: 1px solid #a9a9a9;
  font: 12px/16px "Noto Sans CJK SC", sans-serif;
  color: #1c1c1c;
  padding: 0;
}
.plusrow { height: 27px; flex: none; display: flex; align-items: center; gap: 7px; padding: 3px 0 0 4px; }
.pm { width: 16px; height: 14px; }
.treebox {
  flex: 1;
  width: 155px;
  margin-bottom: 4px;
  display: grid;
  grid-template-columns: 137px 16px;
  grid-template-rows: 1fr 17px;
  background: #fff;
  border: 1px solid #a9a9a9;
  border-left: 0;
  min-height: 0;
}
.tree { overflow: hidden; padding-top: 1px; font-family: "Noto Sans CJK SC", sans-serif; }
.node, .leaf { height: 16px; display: flex; align-items: center; white-space: nowrap; }
.node { padding-left: 7px; }
.branch { margin-left: 12px; border-left: 1px dotted #777; }
.chev { width: 6px; height: 6px; flex: none; border-right: 2px solid #aaa; border-top: 2px solid #aaa; transform: rotate(45deg); margin-right: 4px; }
.chev.down { border-color: #555; transform: rotate(135deg); }
.dash { width: 5px; flex: none; border-top: 1px dotted #777; margin: 0 1px 0 0; }
.dash2 { width: 30px; flex: none; border-top: 1px dotted #777; }
.node .ic { margin-right: 5px; }
.leaf .ic { margin-right: 4px; }
.lat { font-family: "DejaVu Sans Mono", monospace; font-size: 10px; }
.cur .ic { background: #d9d9d9; }
.curtext { background: #d9d9d9; padding-right: 3px; }
.cadbtn { width: 15px; height: 15px; margin-left: 5px; flex: none; }
.newtag { font: 700 8px/8px "Liberation Sans", sans-serif; color: #111; background: #ffe100; padding: 0 1px; align-self: flex-start; margin-left: 2px; }

.vbar { background: #f0f0f0; display: flex; flex-direction: column; min-height: 0; align-items: stretch; }
.arr { display: block; text-align: center; color: #666; font: 700 14px/16px "DejaVu Sans", sans-serif; height: 16px; flex: none; }
.thumb { display: block; background: #c9c9c9; }
.tree-vbar::before { content: ""; display: block; flex: 137px 0 0; order: 1; }
.tree-vbar .arr:first-child { order: 0; }
.tree-vbar .thumb { order: 2; flex: 1; }
.tree-vbar .arr:last-child { order: 3; }
.hbar { grid-column: 1 / -1; background: #f0f0f0; display: flex; align-items: center; }
.hbar .arr { width: 18px; }
.hbar .arr:last-child { margin-left: auto; }
.hthumb { display: block; height: 100%; background: #c9c9c9; }
.treebox .hthumb { width: 92px; }

.drawings { width: 217px; margin-left: 5px; flex: none; padding-top: 2px; display: flex; flex-direction: column; }
.drawings .title { border: 1px solid #9e9e9e; background: #f4f4f4; border-radius: 1px; height: 15px; flex: none; }
.drawings .title-text { font-family: "Noto Sans CJK SC", sans-serif; }
.tabs { height: 18px; flex: none; display: flex; align-items: flex-end; padding: 0 0 0 1px; margin-top: 2px; }
.tab { height: 16px; line-height: 15px; padding: 0 3px; background: #f0f0f0; border: 1px solid #d8d8d8; border-bottom: 0; }
.tab.on { height: 18px; line-height: 17px; background: #fff; padding: 0 7px 0 6px; }
.tabbody { height: 258px; flex: none; margin: 0 0 0 1px; background: #fff; border: 1px solid #d8d8d8; padding: 5px 4px 3px 3px; display: flex; flex-direction: column; width: 214px; }
.dbar { height: 24px; flex: none; display: flex; gap: 1px; }
.dbtn { height: 24px; line-height: 22px; padding: 0 3px; background: #f0f0f0; border: 1px solid #b4b4b4; color: #333; flex: none; }
.drop { width: 13px; padding: 9px 0 0 3px; }
.drop .car { display: block; margin: 0; }
.more { margin-left: 9px; width: 12px; padding: 0; font: 700 13px/12px "Liberation Sans", sans-serif; text-align: center; }
.sheet { flex: 1; margin-top: 2px; display: grid; grid-template-columns: 188px 16px; grid-template-rows: 206px 16px; background: #f0f0f0; border: 1px solid #d0d0d0; min-height: 0; }
.sheetview { overflow: hidden; background: #fff; }
.grid { border-collapse: collapse; table-layout: fixed; width: 188px; font-family: "Noto Sans CJK SC", sans-serif; }
.c1 { width: 22px; }
.c2 { width: 150px; }
.c3 { width: 16px; }
.grid th {
  height: 26px;
  padding: 0;
  font-weight: 400;
  color: #800080;
  background: linear-gradient(#fad9a2, #eeba6b);
  border: 1px solid #d8d8d8;
  overflow: hidden;
}
.grid th:first-child { background: #f2f2f2; }
.grid td {
  height: 19px;
  padding: 0;
  border: 1px solid #c4c4c4;
  white-space: nowrap;
  overflow: hidden;
  line-height: 14px;
  font-size: 12px;
}
.grid td.n { text-align: center; background: #f2f2f2; font: 11px/14px "Liberation Mono", monospace; }
.y { background: #ffff00; }
.r { background: #ff0000; color: #3a0000; }
.tl { display: inline-block; width: 16px; height: 8px; margin: 0 4px 0 9px; border-left: 1px solid #c0c0c0; border-bottom: 1px solid #c0c0c0; vertical-align: top; }
.ind { display: inline-block; width: 20px; }
.minus { display: inline-block; width: 11px; height: 11px; margin: 0 6px 0 2px; border: 1px solid #999; font: 400 10px/9px "Liberation Sans", sans-serif; text-align: center; vertical-align: -1px; }
.grid-vbar::before { content: ""; display: block; flex: 64px 0 0; order: 1; }
.grid-vbar .arr:first-child { order: 0; }
.grid-vbar .thumb { order: 2; height: 68px; flex: none; }
.grid-vbar::after { content: ""; flex: 1; order: 3; }
.grid-vbar .arr:last-child { order: 4; }
.sheet .hthumb { width: 17px; margin-left: -1px; }
.drawings .title.second { margin-top: 11px; }
.layers { flex: 1; margin-top: 1px; background: #fff; border: 1px solid #a9a9a9; padding-top: 0; font-family: "Noto Sans CJK SC", sans-serif; }
.lrow { height: 15px; display: flex; align-items: center; padding-left: 9px; white-space: nowrap; }
.ld { width: 3px; border-top: 1px dotted #777; margin: 0 2px; flex: none; }
.cb { width: 13px; height: 13px; border: 1px solid #555; margin-right: 2px; flex: none; font: 11px/11px "DejaVu Sans", sans-serif; text-align: center; }

.work { flex: 1; min-width: 0; margin-left: 3px; display: flex; flex-direction: column; }
.wseg { padding-left: 4px; margin-left: 1px; }
.wseg .it:last-child { margin-right: 5px; }
.wseg.lead { padding-left: 6px; }
.axis, .ext { margin-left: 5px; padding-left: 1px; }
.ext { width: 601px; }
.laybox { margin-left: 3px; padding-left: 3px; flex: 1; }
.hand { width: 3px; height: 17px; flex: none; margin-right: 2px; background: repeating-linear-gradient(#aaa 0 2px, transparent 2px 4px); }
.axis .hand { margin-right: 5px; }
.ext .hand { margin-right: 4px; }
.laybox .hand { margin-right: 0; }
.combo { width: 68px; height: 24px; line-height: 22px; background: #fff; margin-right: 4px; padding: 0 3px; display: flex; align-items: center; flex: none; }
.combo .car { margin: 0 0 0 auto; }
.combo.first { width: 57px; padding-left: 4px; margin: 0 5px 0 -3px; }
.aftercombo { margin-left: 1px; }
.box { border: 1px solid #0a78d0; background: #eaf3fb; height: 24px; padding: 0 3px 0 0; }
.wseg > .box { width: 52px; justify-content: flex-end; padding-right: 3px; margin: 0 3px 0 -2px; }
.laybox .box { padding-left: 3px; width: 74px; margin-right: 0; }
.blank { width: 56px; margin: 0 5px 0 -4px; }
.far { margin-left: 12px; }

.canvas { display: block; width: 892px; height: 472px; flex: none; }
.cadtx text { fill: #f0f0f0; font: 29px "Liberation Sans", sans-serif; }
.cadtx .cjk30 { font: 28px "Noto Sans CJK SC", sans-serif; }
.cadtx .cjk52 { font: 51px "Noto Sans CJK SC", sans-serif; }
.cadtx .small { font: 12px "Liberation Sans", sans-serif; fill: #ccc; }

.sogou { position: absolute; left: 1110px; top: 9px; width: 163px; height: 27px; }
.slogo {
  position: absolute; left: 0; top: 0; width: 27px; height: 26px;
  background: #f4561c; border-radius: 5px; transform: rotate(-8deg);
  color: #fff; font: 700 24px/26px "Liberation Sans", sans-serif; text-align: center;
}
.sbar {
  position: absolute; left: 20px; top: 3px; right: 0; height: 23px;
  background: #fff; border: 1px solid #d8e4ee; border-right: 0;
  display: flex; align-items: center; padding-left: 13px; gap: 8px; color: #2a86d8;
}
.szh { font: 700 15px/20px "Noto Sans CJK SC", sans-serif; }
.sdot { font: 700 13px/16px "Liberation Sans", sans-serif; width: 14px; }
.si { width: 16px; height: 16px; flex: none; }

.speed {
  position: absolute; left: 1078px; top: 77px; width: 74px; height: 74px; border-radius: 50%;
  background: rgba(255, 255, 255, .95); box-shadow: 0 0 5px rgba(120, 130, 150, .45);
  overflow: hidden; text-align: center; padding-top: 25px;
}
.spd-main { font: 18px/20px "Liberation Sans", sans-serif; color: #222; white-space: nowrap; }
.spd-main small { font-size: 8.500px; color: #555; vertical-align: 1px; }
.spd-sub { font: 9.500px/12px "Liberation Sans", sans-serif; color: #9a9a9a; }
.wave { position: absolute; left: 0; bottom: 0; width: 74px; height: 15px; }
```
